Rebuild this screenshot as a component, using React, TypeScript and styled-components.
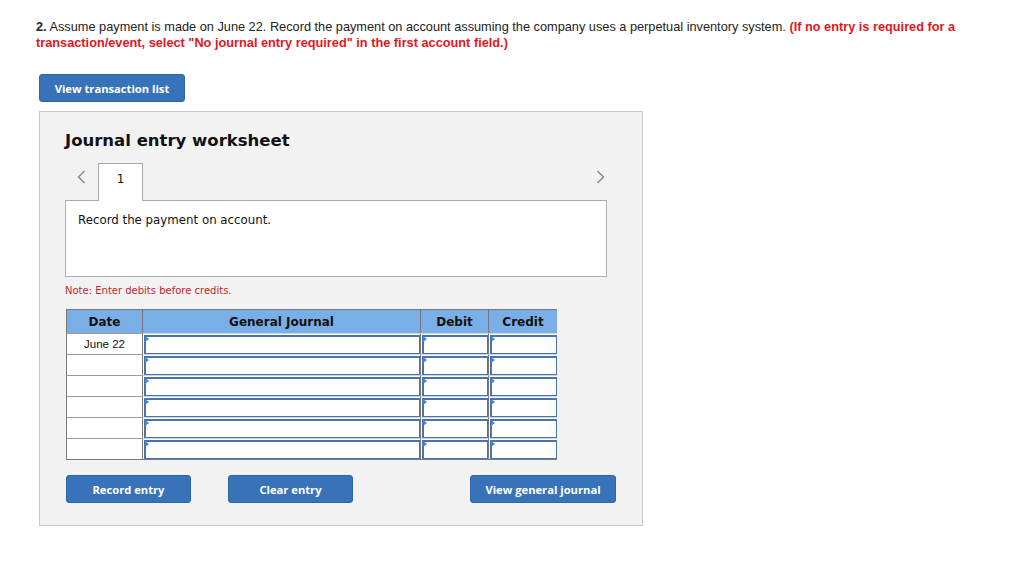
import styled, { createGlobalStyle } from 'styled-components';

const GlobalStyle = createGlobalStyle`
  html, body {
    margin: 0;
    padding: 0;
    background: #ffffff;
  }
  body {
    font-family: "Liberation Sans", Arial, sans-serif;
  }
`;

const Page = styled.div`
  width: 1024px;
  height: 579px;
  padding: 19px 0 0 36px;
  box-sizing: border-box;
`;

const Question = styled.div`
  margin: 0;
  width: 960px;
  font-size: 12.75px;
  line-height: 16px;
  color: #222;
`;

const Hint = styled.span`
  color: #e8141d;
  font-weight: bold;
`;

const BlueButton = styled.button<{ $w: number }>`
  width: ${(p) => p.$w}px;
  height: 28px;
  background: #3873b9;
  border: 1px solid #2f66a8;
  border-radius: 3px;
  color: #fff;
  font-family: "Open Sans", sans-serif;
  font-weight: 700;
  font-size: 11.2px;
  padding: 0;
  cursor: pointer;
`;

const TopButtonRow = styled.div`
  margin: 23px 0 0 3px;
`;

const Panel = styled.div`
  margin: 9px 0 0 3px;
  width: 604px;
  height: 415px;
  box-sizing: border-box;
  background: #f2f2f2;
  border: 1px solid #c9c9c9;
  padding: 17px 0 0 25px;
  font-family: "DejaVu Sans", Verdana, sans-serif;
`;

const Heading = styled.h2`
  margin: 0;
  font-size: 16.5px;
  font-weight: bold;
  color: #111;
  line-height: 24px;
`;

const NavRow = styled.div`
  display: flex;
  align-items: flex-end;
  margin-top: 9px;
  width: 552px;
  height: 38px;
`;

const Arrow = styled.div`
  width: 33px;
  height: 38px;
  display: flex;
  align-items: flex-start;
  justify-content: center;
  padding-top: 8px;
  box-sizing: border-box;
`;

const Tab = styled.div`
  width: 45px;
  height: 38px;
  box-sizing: border-box;
  background: #fff;
  border: 1px solid #a8a8a8;
  border-bottom: none;
  display: flex;
  align-items: flex-start;
  justify-content: center;
  padding-top: 8px;
  font-size: 12px;
  color: #111;
  position: relative;
  z-index: 1;
  margin-bottom: -1px;
`;

const NavSpacer = styled.div`
  flex: 1;
`;

const Description = styled.div`
  width: 542px;
  height: 77px;
  box-sizing: border-box;
  background: #fff;
  border: 1px solid #aeaeae;
  padding: 12px 12px;
  font-size: 11.8px;
  color: #111;
`;

const Note = styled.div`
  margin-top: 8px;
  font-size: 10px;
  color: #c1272d;
`;

const Grid = styled.div`
  margin: 13px 0 0 1px;
  display: grid;
  grid-template-columns: 76px 278px 68px 69px;
  grid-auto-rows: 21px;
  grid-template-rows: 24px;
  width: 491px;
  border-right: 1px solid #7a7a7a;
  border-bottom: 1px solid #7a7a7a;
  box-sizing: border-box;
`;

const HeadCell = styled.div`
  background: #7aaee6;
  border-top: 1px solid #777;
  border-left: 1px solid #777;
  display: flex;
  align-items: center;
  justify-content: center;
  font-weight: bold;
  font-size: 12px;
  color: #111;
`;

const DateCell = styled.div`
  background: #fff;
  border-top: 1px solid #9a9a9a;
  border-left: 1px solid #7a7a7a;
  display: flex;
  align-items: center;
  justify-content: center;
  font-family: "Liberation Sans", Arial, sans-serif;
  font-size: 11.5px;
  color: #111;
`;

const InputCell = styled.div`
  background: #fff;
  border-top: 1px solid #c7d6ea;
  border-left: 1px solid #7a7a7a;
  padding: 1px 0 0 1px;
  box-sizing: border-box;
  position: relative;
`;

const InputBox = styled.div`
  height: 100%;
  box-sizing: border-box;
  border: 2px solid #4a74a6;
  border-right-width: 1px;
  border-bottom-width: 1px;
  background: #fff;
`;

const Marker = styled.div`
  position: absolute;
  left: 2px;
  top: 2px;
  width: 0;
  height: 0;
  border-top: 3px solid transparent;
  border-bottom: 3px solid transparent;
  border-left: 4px solid #3d86d6;
`;

const ButtonRow = styled.div`
  display: flex;
  margin: 15px 0 0 1px;
  gap: 37px;
`;

const ButtonGap = styled.div`
  width: 43px;
`;

const Chevron = ({ dir }: { dir: 'left' | 'right' }) => (
  <svg width="9" height="14" viewBox="0 0 9 14">
    <polyline
      points={dir === 'left' ? '7.5,1 1.5,7 7.5,13' : '1.5,1 7.5,7 1.5,13'}
      fill="none"
      stroke="#8c8c8c"
      strokeWidth="1.5"
    />
  </svg>
);

const Input = () => (
  <InputCell>
    <InputBox />
    <Marker />
  </InputCell>
);

const rows = ['June 22', '', '', '', '', ''];

export default function App() {
  return (
    <Page>
      <GlobalStyle />
      <Question>
        <b>2.</b> Assume payment is made on June 22. Record the payment on account assuming the company uses a
        perpetual inventory system.{' '}
        <Hint>
          (If no entry is required for a transaction/event, select "No journal entry required" in the first
          account field.)
        </Hint>
      </Question>
      <TopButtonRow>
        <BlueButton $w={146}>View transaction list</BlueButton>
      </TopButtonRow>
      <Panel>
        <Heading>Journal entry worksheet</Heading>
        <NavRow>
          <Arrow>
            <Chevron dir="left" />
          </Arrow>
          <Tab>1</Tab>
          <NavSpacer />
          <Arrow>
            <Chevron dir="right" />
          </Arrow>
        </NavRow>
        <Description>Record the payment on account.</Description>
        <Note>Note: Enter debits before credits.</Note>
        <Grid>
          <HeadCell>Date</HeadCell>
          <HeadCell>General Journal</HeadCell>
          <HeadCell>Debit</HeadCell>
          <HeadCell>Credit</HeadCell>
          {rows.map((d, i) => (
            <>
              <DateCell key={`d${i}`}>{d}</DateCell>
              <Input key={`g${i}`} />
              <Input key={`b${i}`} />
              <Input key={`c${i}`} />
            </>
          ))}
        </Grid>
        <ButtonRow>
          <BlueButton $w={125}>Record entry</BlueButton>
          <BlueButton $w={125}>Clear entry</BlueButton>
          <ButtonGap />
          <BlueButton $w={146}>View general journal</BlueButton>
        </ButtonRow>
      </Panel>
    </Page>
  );
}
